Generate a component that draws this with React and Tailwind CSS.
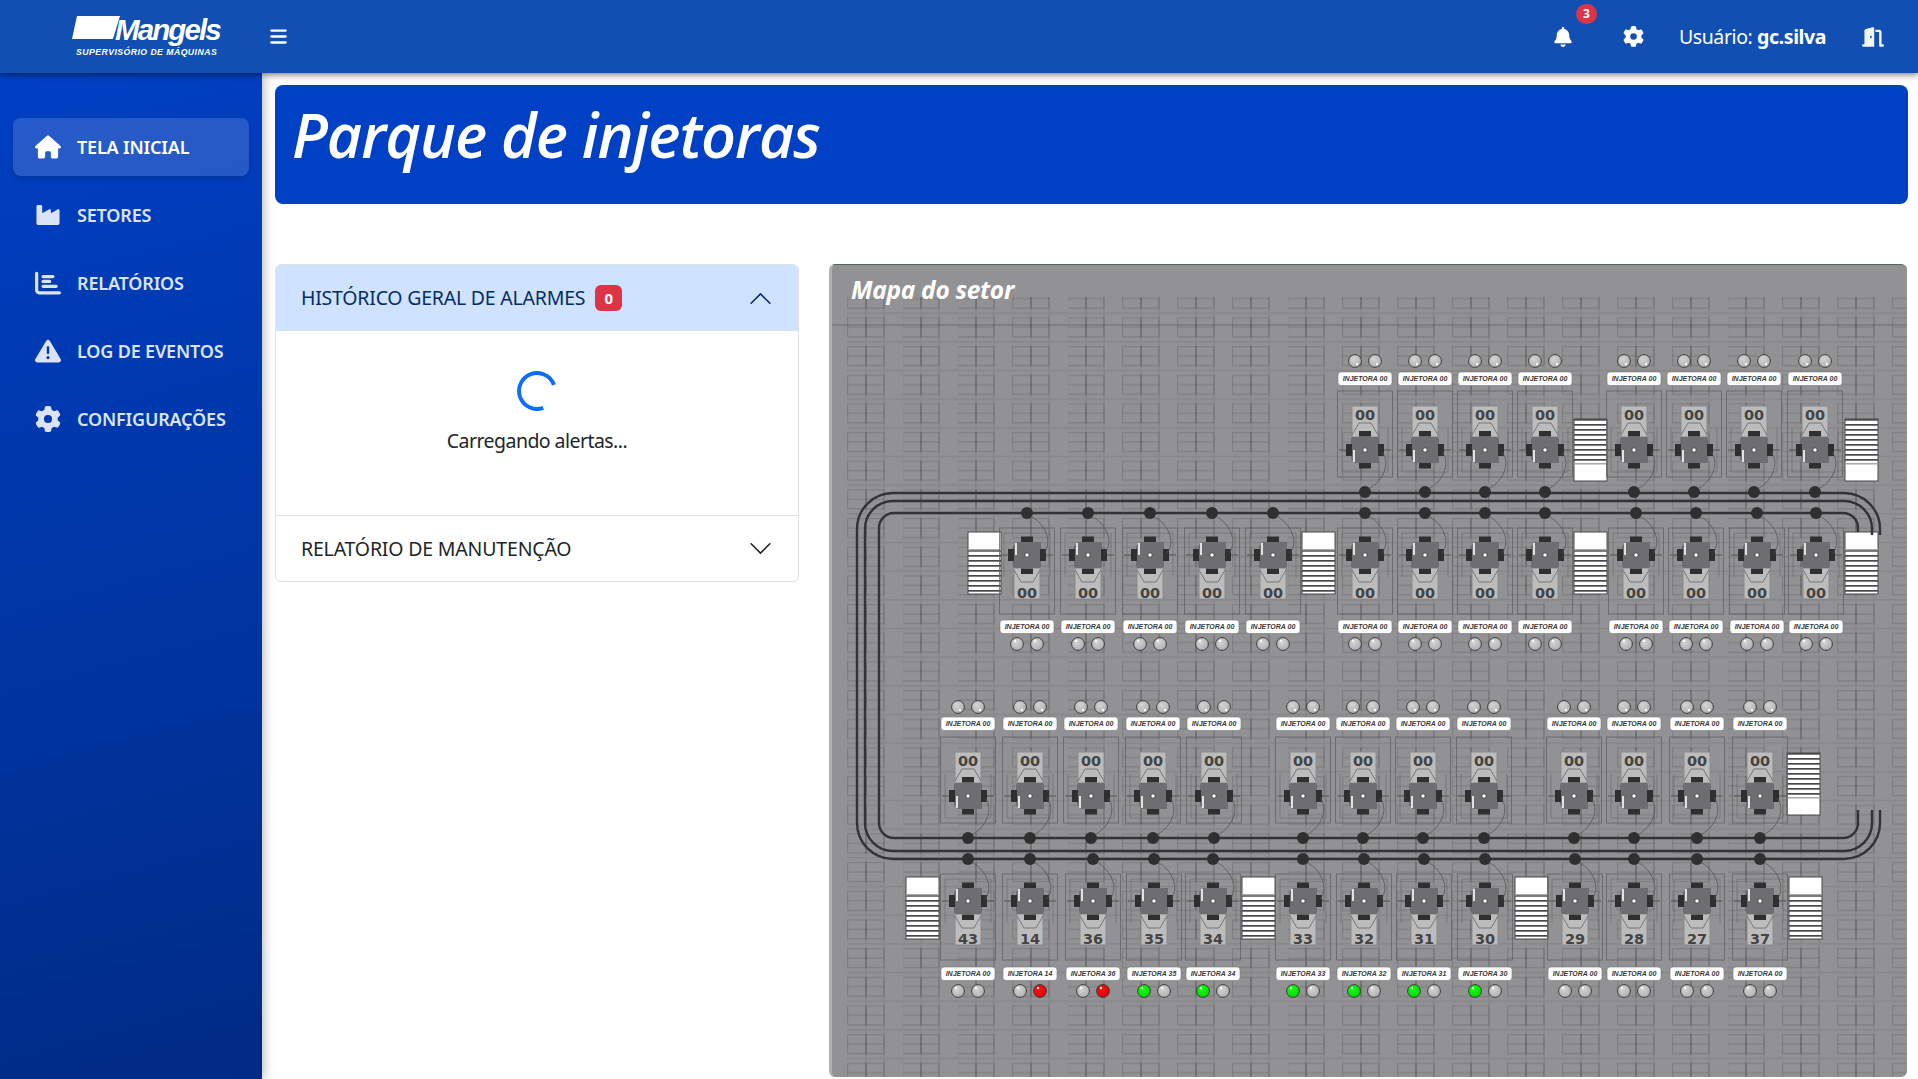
import { FaBars, FaBell, FaChartBar, FaDoorOpen, FaGear, FaHouse, FaIndustry, FaTriangleExclamation } from "react-icons/fa6";

const NAV = [
  { label: "TELA INICIAL", icon: FaHouse, active: true },
  { label: "SETORES", icon: FaIndustry },
  { label: "RELATÓRIOS", icon: FaChartBar },
  { label: "LOG DE EVENTOS", icon: FaTriangleExclamation },
  { label: "CONFIGURAÇÕES", icon: FaGear },
];

// map rows, coordinates are in page pixels (the svg viewBox starts at the panel corner)
const ROWS = [
  { top: 391, flip: false, labelY: 372, lampY: 361, xs: [1365, 1425, 1485, 1545, 1634, 1694, 1754, 1815] },
  { top: 528, flip: true, labelY: 620, lampY: 644, xs: [1027, 1088, 1150, 1212, 1273, 1365, 1425, 1485, 1545, 1636, 1696, 1757, 1816] },
  { top: 737, flip: false, labelY: 717, lampY: 707, xs: [968, 1030, 1091, 1153, 1214, 1303, 1363, 1423, 1484, 1574, 1634, 1697, 1760] },
];

const LAST_ROW = [
  { x: 968, num: "43", tag: "00", lamps: "gg" },
  { x: 1030, num: "14", tag: "14", lamps: "gr" },
  { x: 1093, num: "36", tag: "36", lamps: "gr" },
  { x: 1154, num: "35", tag: "35", lamps: "vg" },
  { x: 1213, num: "34", tag: "34", lamps: "vg" },
  { x: 1303, num: "33", tag: "33", lamps: "vg" },
  { x: 1364, num: "32", tag: "32", lamps: "vg" },
  { x: 1424, num: "31", tag: "31", lamps: "vg" },
  { x: 1485, num: "30", tag: "30", lamps: "vg" },
  { x: 1575, num: "29", tag: "00", lamps: "gg" },
  { x: 1634, num: "28", tag: "00", lamps: "gg" },
  { x: 1697, num: "27", tag: "00", lamps: "gg" },
  { x: 1760, num: "37", tag: "00", lamps: "gg" },
];

const STACKS = [
  { x: 1574, y: 419, solidTop: false },
  { x: 1845, y: 419, solidTop: false },
  { x: 968, y: 532, solidTop: true },
  { x: 1302, y: 532, solidTop: true },
  { x: 1574, y: 532, solidTop: true },
  { x: 1845, y: 532, solidTop: true },
  { x: 1787, y: 753, solidTop: false },
  { x: 906, y: 877, solidTop: true },
  { x: 1242, y: 877, solidTop: true },
  { x: 1515, y: 877, solidTop: true },
  { x: 1789, y: 877, solidTop: true },
];

const LAMP_FILL = { g: "url(#lampGray)", r: "url(#lampRed)", v: "url(#lampGreen)" };

function Machine({ cx, top, flip, num }) {
  const c = top + 59;
  const mirror = flip ? `translate(0 ${2 * top + 86}) scale(1 -1)` : undefined;
  return (
    <g>
      <g transform={mirror}>
        <rect x={cx - 27.5} y={top} width={55} height={86} fill="none" stroke="#5f5f61" strokeOpacity="0.75" />
        <path d={`M${cx - 23} ${top + 37}V${top + 81}H${cx + 23}V${top + 37}`} fill="none" stroke="#5f5f61" strokeOpacity="0.5" />
        <rect x={cx - 13} y={top + 15} width={26} height={31} fill="#bcbcbd" stroke="#8a8a8c" />
        <path d={`M${cx - 13} ${top + 44}L${cx - 6} ${top + 32}H${cx + 6}L${cx + 13} ${top + 44}`} fill="none" stroke="#77777a" />
        <path d={`M${cx - 26} ${c}H${cx + 26}`} stroke="#555" />
        <path d={`M${cx - 13} ${top + 46}H${cx + 13}L${cx + 14} ${top + 48}V${top + 72}H${cx - 10}L${cx - 14} ${top + 68}V${top + 48}Z`} fill="#6e6e70" />
        <rect x={cx - 6} y={top + 40} width={12} height={5.5} fill="#2f2f30" />
        <rect x={cx - 6} y={top + 72} width={12} height={5.5} fill="#2f2f30" />
        <rect x={cx - 19} y={c - 6} width={6} height={12} fill="#2f2f30" />
        <rect x={cx + 13} y={c - 6} width={6} height={12} fill="#2f2f30" />
        <rect x={cx - 12} y={c} width={2} height={12} fill="#e2e2e2" />
        <circle cx={cx} cy={c} r={2.2} fill="#fff" stroke="#333" strokeWidth="0.8" />
        <path d={`M${cx + 5} ${top + 97}C${cx + 18} ${top + 90} ${cx + 26} ${top + 72} ${cx + 17} ${top + 61}`} fill="none" stroke="#555" strokeWidth="0.8" />
        <circle cx={cx} cy={top + 101} r={6} fill="#2f2f30" />
      </g>
      <text x={cx} y={(flip ? top + 64 : top + 23) + 5.5} textAnchor="middle" fontFamily="'DejaVu Sans', sans-serif" fontWeight="700" fontSize="14.5" fill="#444">
        {num}
      </text>
    </g>
  );
}

function Label({ cx, y, tag }) {
  return (
    <g>
      <rect x={cx - 27} y={y} width={54} height={13.5} rx={3} fill="#fff" stroke="#77777a" strokeWidth="0.6" />
      <text x={cx} y={y + 9.4} textAnchor="middle" fontFamily="'Liberation Sans', sans-serif" fontStyle="italic" fontWeight="700" fontSize="7" fill="#3a3a3a">
        INJETORA {tag}
      </text>
    </g>
  );
}

function Lamp({ x, y, kind, lowGlint }) {
  return (
    <g>
      <circle cx={x} cy={y} r={6.4} fill={LAMP_FILL[kind]} stroke="#3c3c3c" strokeWidth="1" />
      <circle cx={lowGlint ? x + 2 : x - 2} cy={lowGlint ? y + 3 : y - 3} r={1.2} fill="#fff" fillOpacity="0.9" />
    </g>
  );
}

function Stack({ x, y, solidTop }) {
  const stripeY = solidTop ? y + 18 : y;
  return (
    <g>
      <rect x={x} y={y} width={33} height={62} fill="#fff" stroke="#48484a" strokeWidth="1" />
      {[0, 1, 2, 3, 4, 5, 6, 7, 8].map((i) => (
        <rect key={i} x={x} y={stripeY + i * 5} width={33} height={1.7} fill="#48484a" />
      ))}
      <rect x={x} y={solidTop ? y + 17 : y + 44} width={33} height={1.5} fill="#a8a8a8" />
    </g>
  );
}

function SectorMap() {
  return (
    <svg viewBox="829 265 1078 812" width="1078" height="812" className="block">
      <defs>
        <pattern id="bricks" patternUnits="userSpaceOnUse" x="847" y="317.3" width="55" height="28.67">
          <g fill="none" stroke="#000" strokeOpacity="0.12" strokeWidth="1.4">
            <rect x="0.5" y="0.5" width="18.5" height="19" />
            <rect x="19" y="0.5" width="18" height="19" />
            <path d="M0.5 10H37" />
            <path d="M19 0V28.67M37 0V28.67M0 24.5H55" strokeOpacity="0.08" />
          </g>
        </pattern>
        <radialGradient id="lampGray" cx="0.4" cy="0.35" r="0.8">
          <stop offset="0" stopColor="#d4d4d4" />
          <stop offset="1" stopColor="#a9a9aa" />
        </radialGradient>
        <radialGradient id="lampRed" cx="0.4" cy="0.35" r="0.8">
          <stop offset="0" stopColor="#ff1010" />
          <stop offset="1" stopColor="#d80000" />
        </radialGradient>
        <radialGradient id="lampGreen" cx="0.4" cy="0.35" r="0.8">
          <stop offset="0" stopColor="#10ff10" />
          <stop offset="1" stopColor="#00d000" />
        </radialGradient>
      </defs>

      <rect x="847" y="297" width="1060" height="780" fill="url(#bricks)" />
      <path d="M829 325H1907" stroke="#000" strokeOpacity="0.25" />

      {STACKS.map((s) => (
        <Stack key={`${s.x}-${s.y}`} {...s} />
      ))}

      {/* the three conveyor rails */}
      <g fill="none" stroke="#333335" strokeWidth="2.4">
        <path d="M1880 535V529A36 36 0 0 0 1844 493H893A36 36 0 0 0 857 529V823A36 36 0 0 0 893 859H1844A36 36 0 0 0 1880 823V810" />
        <path d="M1872 535V529A28 28 0 0 0 1844 501H893A28 28 0 0 0 865 529V823A28 28 0 0 0 893 851H1844A28 28 0 0 0 1872 823V810" />
        <path d="M1858 532V528A15 15 0 0 0 1843 513H894A15 15 0 0 0 879 528V823A15 15 0 0 0 894 838H1843A15 15 0 0 0 1858 823V810" />
      </g>

      {ROWS.map((row) =>
        row.xs.map((cx) => (
          <g key={`${row.top}-${cx}`}>
            <Machine cx={cx} top={row.top} flip={row.flip} num="00" />
            <Label cx={cx} y={row.labelY} tag="00" />
            <Lamp x={cx - 10} y={row.lampY} kind="g" lowGlint={!row.flip} />
            <Lamp x={cx + 10} y={row.lampY} kind="g" lowGlint={!row.flip} />
          </g>
        )),
      )}

      {LAST_ROW.map((m) => (
        <g key={m.x}>
          <Machine cx={m.x} top={874} flip num={m.num} />
          <Label cx={m.x} y={967} tag={m.tag} />
          <Lamp x={m.x - 10} y={991} kind={m.lamps[0]} />
          <Lamp x={m.x + 10} y={991} kind={m.lamps[1]} />
        </g>
      ))}
    </svg>
  );
}

// bootstrap accordion chevron
function Chevron({ up }) {
  return (
    <svg viewBox="0 0 16 16" width="25" height="25" fill="#212529" className={up ? "ml-auto rotate-180 fill-[#052c65]" : "ml-auto"}>
      <path d="M1.646 4.646a.5.5 0 0 1 .708 0L8 10.293l5.646-5.647a.5.5 0 0 1 .708.708l-6 6a.5.5 0 0 1-.708 0l-6-6a.5.5 0 0 1 0-.708z" />
    </svg>
  );
}

function Header() {
  return (
    <header className="relative z-20 flex h-[73px] shrink-0 items-center bg-[#1150b2] pr-[34px] text-white shadow-[0_2px_6px_rgba(0,0,0,0.5)]">
      <div className="ml-[72px] flex w-[150px] flex-col">
        <div className="flex h-[31px] items-start">
          <svg width="48" height="23" viewBox="0 0 48 23" className="shrink-0">
            <path d="M5 0H48L41 23H0Z" fill="#fff" />
          </svg>
          <span className="-mt-[3px] -ml-[5px] font-['Liberation_Sans',sans-serif] text-[29.5px] leading-[34px] font-bold tracking-[-1.9px] italic">Mangels</span>
        </div>
        <span className="mt-[1px] ml-[4px] font-['Liberation_Sans',sans-serif] text-[8.7px] leading-[9px] font-bold tracking-[0.45px] whitespace-nowrap italic">SUPERVISÓRIO DE MÁQUINAS</span>
      </div>
      <FaBars className="ml-[47px] text-[19px]" />
      <div className="ml-auto flex items-center font-['Noto_Sans',sans-serif] text-[19.5px]">
        <div className="relative">
          <FaBell className="text-[20px]" />
          <span className="absolute -top-[23px] left-[23px] flex h-5 w-[21px] items-center justify-center rounded-full bg-[#dc3545] text-[12px] font-bold">3</span>
        </div>
        <FaGear className="ml-[50px] text-[21px]" />
        <span className="ml-[35px] tracking-[-0.4px]">
          Usuário: <b>gc.silva</b>
        </span>
        <FaDoorOpen className="ml-[36px] text-[22px] opacity-95" />
      </div>
    </header>
  );
}

function Sidebar() {
  return (
    <aside className="relative z-10 w-[262px] shrink-0 bg-[linear-gradient(165deg,#0040c4,#002b85)] px-[13px] pt-[45px] shadow-[2px_0_10px_rgba(0,0,0,0.28)]">
      <nav className="flex flex-col gap-[10px]">
        {NAV.map(({ label, icon: Icon, active }) => (
          <a
            key={label}
            className={[
              "flex h-[58px] items-center rounded-lg pl-[22px] font-['Noto_Sans',sans-serif] text-[18px] font-semibold tracking-[-0.18px]",
              active ? "bg-white/15 text-white shadow-md" : "text-[#dbe3f6]",
            ].join(" ")}
          >
            <span className="flex w-[26px] justify-center text-[26px]">
              <Icon />
            </span>
            <span className="ml-[16px]">{label}</span>
          </a>
        ))}
      </nav>
    </aside>
  );
}

function Accordion() {
  return (
    <div className="h-[318px] w-[524px] shrink-0 overflow-hidden rounded-md border border-[#dee2e6] bg-white font-['Noto_Sans',sans-serif] text-[19.5px] text-[#212529]">
      <div className="flex h-[66px] items-center bg-[#cfe2ff] pr-[25px] pl-[25px] text-[#052c65]">
        <span className="tracking-[-0.22px]">HISTÓRICO GERAL DE ALARMES</span>
        <span className="ml-[10px] flex h-[26px] w-[27px] items-center justify-center rounded-md bg-[#dc3545] text-[15px] font-bold text-white">0</span>
        <Chevron up />
      </div>
      <div className="flex h-[185px] flex-col items-center border-b border-[#dee2e6] pt-[40px]">
        <div className="h-10 w-10 rotate-[25deg] rounded-full border-4 border-[#0d6efd] border-r-transparent" />
        <p className="mt-[15px] tracking-[-0.55px]">Carregando alertas...</p>
      </div>
      <div className="flex h-[65px] items-center pr-[25px] pl-[25px]">
        <span className="tracking-[-0.18px]">RELATÓRIO DE MANUTENÇÃO</span>
        <Chevron />
      </div>
    </div>
  );
}

export default function App() {
  return (
    <div className="flex h-[1079px] w-[1918px] flex-col overflow-hidden bg-white">
      <Header />
      <div className="flex min-h-0 flex-1">
        <Sidebar />
        <main className="min-w-0 flex-1 pt-[12px] pr-[10px] pl-[13px]">
          <div className="flex h-[119px] items-center rounded-lg bg-[#0040c4] pb-[20px] pl-[17px] font-['Open_Sans',sans-serif] text-[61px] font-semibold tracking-[-1px] text-white italic">
            Parque de injetoras
          </div>
          <div className="mt-[60px] flex">
            <Accordion />
            <section className="relative ml-[30px] h-[813px] w-[1078px] shrink-0 overflow-hidden rounded-md border-t border-l-[3px] border-t-[#4f6a5a] border-l-[#b0b0b2] bg-[#929294]">
              <div className="-ml-[3px]">
                <SectorMap />
              </div>
              <h2 className="absolute top-[7px] left-[19px] font-['Open_Sans',sans-serif] text-[24.5px] font-bold tracking-[-0.3px] text-white italic">Mapa do setor</h2>
            </section>
          </div>
        </main>
      </div>
    </div>
  );
}
